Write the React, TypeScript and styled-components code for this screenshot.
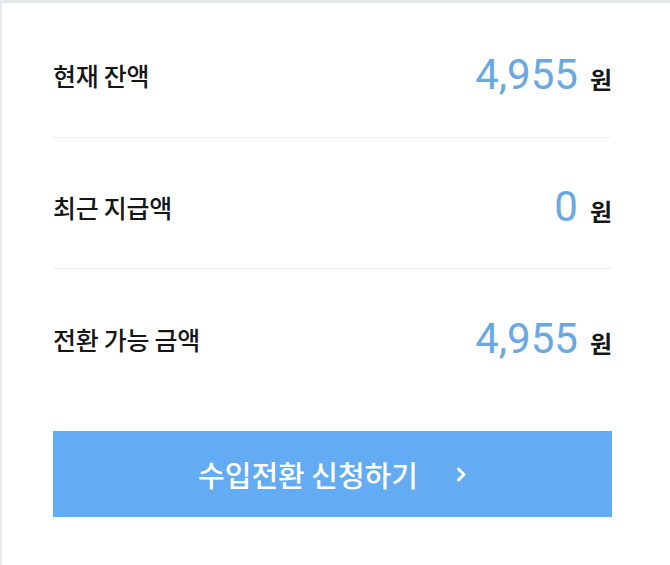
import React from "react";
import styled, { createGlobalStyle } from "styled-components";

const Global = createGlobalStyle`
  html, body { margin: 0; padding: 0; background: #ffffff; }
  body { font-family: "Noto Sans CJK KR", "Noto Sans", sans-serif; }
`;

const Page = styled.div`
  box-sizing: border-box;
  width: 670px;
  height: 565px;
  border-top: 3px solid #e4e8ea;
  border-left: 2px solid #e9edef;
  padding: 0 58px 0 51px;
  display: flex;
  flex-direction: column;
`;

const Row = styled.div<{ $first?: boolean; $last?: boolean }>`
  box-sizing: border-box;
  height: ${(p) => (p.$first ? 135 : 131)}px;
  padding-top: ${(p) => (p.$first ? 10 : 8)}px;
  display: flex;
  align-items: center;
  justify-content: space-between;
  border-bottom: ${(p) => (p.$last ? "none" : "1px solid #eef1f3")};
`;

const Label = styled.span`
  font-family: "Noto Sans CJK KR", sans-serif;
  font-size: 25px;
  font-weight: 500;
  color: #161616;
  line-height: 30px;
  letter-spacing: -0.3px;
`;

const Value = styled.span`
  display: flex;
  align-items: baseline;
  gap: 12px;
`;

const Amount = styled.span`
  font-family: Roboto, "Liberation Sans", sans-serif;
  font-size: 42px;
  font-weight: 400;
  color: #68a9e3;
  line-height: 44px;
`;

const Unit = styled.span`
  font-family: "Noto Sans CJK KR", sans-serif;
  font-size: 24px;
  font-weight: 700;
  color: #161616;
  line-height: 30px;
`;

const Button = styled.button`
  margin-top: 31px;
  height: 86px;
  width: 100%;
  border: none;
  background: #63abf3;
  color: #ffffff;
  display: flex;
  align-items: center;
  justify-content: center;
  gap: 38px;
  cursor: pointer;
  padding: 0;
`;

const ButtonText = styled.span`
  font-family: "Noto Sans CJK KR", sans-serif;
  font-size: 29px;
  font-weight: 500;
  line-height: 32px;
`;

const Chevron = () => (
  <svg width="11" height="15" viewBox="0 0 11 15" aria-hidden="true">
    <path d="M2.5 2 L8 7.5 L2.5 13" fill="none" stroke="#ffffff" strokeWidth="3" strokeLinecap="round" strokeLinejoin="round" />
  </svg>
);

const rows = [
  { label: "현재 잔액", amount: "4,955" },
  { label: "최근 지급액", amount: "0" },
  { label: "전환 가능 금액", amount: "4,955" },
];

export default function App() {
  return (
    <>
      <Global />
      <Page>
        {rows.map((r, i) => (
          <Row key={r.label} $first={i === 0} $last={i === rows.length - 1}>
            <Label>{r.label}</Label>
            <Value>
              <Amount>{r.amount}</Amount>
              <Unit>원</Unit>
            </Value>
          </Row>
        ))}
        <Button>
          <ButtonText>수입전환 신청하기</ButtonText>
          <Chevron />
        </Button>
      </Page>
    </>
  );
}
